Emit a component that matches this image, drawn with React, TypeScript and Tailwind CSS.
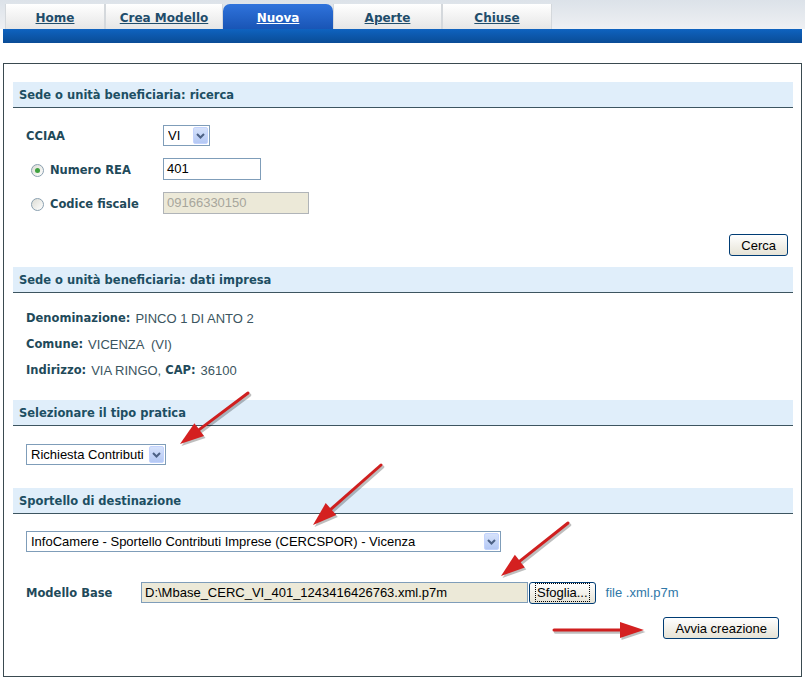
import type { ReactElement, ReactNode } from 'react';

const tabs = [
	{ label: 'Home', w: 'w-[100px]' },
	{ label: 'Crea Modello', w: 'w-[118px]' },
	{ label: 'Nuova', w: 'w-[110px]', active: true },
	{ label: 'Aperte', w: 'w-[109px]' },
	{ label: 'Chiuse', w: 'w-[110px]' },
];

const verdana = "font-['DejaVu_Sans',Verdana,sans-serif]";
const arial = "font-['Liberation_Sans',Arial,sans-serif]";

function SectionHeader({ children }: { children: ReactNode }): ReactElement {
	return (
		<div
			className={`h-[26px] flex items-center pl-[6px] pt-[2px] bg-[#e0eefa] border-b border-[#3d5560] text-[11.5px] font-bold text-[#1d4f63] ${verdana}`}
		>
			{children}
		</div>
	);
}

function Select({ value, w }: { value: string; w: string }): ReactElement {
	return (
		<div
			className={`${w} h-[21px] flex items-center border border-[#7f9db9] bg-white pl-[4px] pr-[1px] ${arial} font-normal text-[13px] text-black`}
		>
			<span className="flex-1 truncate">{value}</span>
			<span className="w-[15px] h-[17px] rounded-[2px] bg-gradient-to-b from-[#d6e2fb] to-[#b4c8f4] border border-[#c3d3fd] flex items-center justify-center">
				<svg width="9" height="6" viewBox="0 0 9 6">
					<path d="M1 1 L4.5 4.5 L8 1" fill="none" stroke="#4d6185" strokeWidth="2" />
				</svg>
			</span>
		</div>
	);
}

function Button({ children, focus }: { children: ReactNode; focus?: boolean }): ReactElement {
	return (
		<button
			className={`h-[22px] ${focus ? 'px-[6px]' : 'px-[11px]'} rounded-[3px] border border-[#003c74] bg-gradient-to-b from-white to-[#e6e3d6] ${arial} font-normal text-[13px] text-black leading-none`}
		>
			<span className={focus ? 'outline-1 outline-dotted outline-black px-[1px] py-[1px]' : ''}>
				{children}
			</span>
		</button>
	);
}

function Radio({ checked }: { checked?: boolean }): ReactElement {
	return (
		<span className="w-[13px] h-[13px] rounded-full border border-[#8aa0b0] bg-gradient-to-br from-[#dcdcd4] to-white flex items-center justify-center">
			{checked && <span className="w-[5px] h-[5px] rounded-full bg-[#3fa13f]" />}
		</span>
	);
}

function Arrow({ x1, y1, x2, y2 }: { x1: number; y1: number; x2: number; y2: number }): ReactElement {
	const dx = x2 - x1;
	const dy = y2 - y1;
	const len = Math.hypot(dx, dy);
	const ux = dx / len;
	const uy = dy / len;
	const hl = 24;
	const hw = 8;
	const bx = x2 - ux * hl;
	const by = y2 - uy * hl;
	const head = `${x2},${y2} ${bx - uy * hw},${by + ux * hw} ${bx + uy * hw},${by - ux * hw}`;
	return (
		<g>
			<g transform="translate(1.5,2)" opacity="0.25">
				<line x1={x1} y1={y1} x2={bx} y2={by} stroke="#000" strokeWidth="3.5" strokeLinecap="round" />
				<polygon points={head} fill="#000" />
			</g>
			<line x1={x1} y1={y1} x2={bx} y2={by} stroke="#cf1f1f" strokeWidth="3" strokeLinecap="round" />
			<polygon points={head} fill="#d42020" />
		</g>
	);
}

export default function App(): ReactElement {
	return (
		<div className="relative w-[805px] h-[681px] bg-white overflow-hidden">
			{/* tab bar */}
			<div className="bg-gradient-to-b from-[#dce2e9] to-[#eef0f3] pt-[4px] pl-[5px] flex">
				{tabs.map((t) => (
					<div
						key={t.label}
						className={`${t.w} h-[25px] flex items-center justify-center pt-[2px] text-[12px] font-bold underline ${verdana} ${
							t.active
								? 'rounded-t-[7px] bg-gradient-to-b from-[#2f73dc] to-[#1955b6] text-white'
								: 'bg-gradient-to-b from-white to-[#e6e6e6] border-x border-[#d4d8dc] text-[#1f4d6b]'
						}`}
					>
						{t.label}
					</div>
				))}
			</div>
			<div className="mx-[3px] h-[14px] bg-gradient-to-b from-[#0f63c0] to-[#0a4c96]" />

			{/* main panel */}
			<div className="mx-[3px] mt-[20px] h-[614px] border border-[#3a4a50] pt-[18px] pl-[9px] pr-[8px]">
				<SectionHeader>Sede o unità beneficiaria: ricerca</SectionHeader>
				<div className={`pl-[13px] text-[11.5px] font-bold text-[#1f4a5a] ${verdana}`}>
					<div className="mt-[17px] h-[21px] flex items-center">
						<span className="w-[137px] pt-[3px]">CCIAA</span>
						<Select value="VI" w="w-[47px]" />
					</div>
					<div className="mt-[12px] h-[22px] flex items-center">
						<span className="w-[137px] flex items-center gap-[6px] pl-[5px] pt-[3px]">
							<Radio checked />
							Numero REA
						</span>
						<div className={`w-[98px] h-[22px] border border-[#7f9db9] bg-white flex items-center px-[3px] ${arial} font-normal text-[13px] text-black`}>
							401
						</div>
					</div>
					<div className="mt-[12px] h-[22px] flex items-center">
						<span className="w-[137px] flex items-center gap-[6px] pl-[5px] pt-[3px]">
							<Radio />
							Codice fiscale
						</span>
						<div className={`w-[146px] h-[22px] border border-[#b0b4b8] bg-[#ece9d8] flex items-center px-[3px] ${arial} font-normal text-[13px] text-[#a7a69c]`}>
							09166330150
						</div>
					</div>
				</div>
				<div className="mt-[20px] flex justify-end pr-[5px]">
					<Button>Cerca</Button>
				</div>

				<div className="mt-[11px]">
					<SectionHeader>Sede o unità beneficiaria: dati impresa</SectionHeader>
				</div>
				<div className={`mt-[13px] pl-[13px] text-[11.5px] font-bold text-[#1f4a5a] ${verdana}`}>
					<div className="h-[26px] flex items-center">
						Denominazione:<span className={`ml-[5px] font-normal text-[13px] text-[#3b5560] ${arial}`}>PINCO 1 DI ANTO 2</span>
					</div>
					<div className="h-[26px] flex items-center">
						Comune:<span className={`ml-[5px] font-normal text-[13px] text-[#3b5560] whitespace-pre ${arial}`}>VICENZA  (VI)</span>
					</div>
					<div className="h-[25px] flex items-center">
						Indirizzo:<span className={`ml-[5px] font-normal text-[13px] text-[#3b5560] ${arial}`}>VIA RINGO, </span>
						<span className="ml-[4px]">CAP:</span>
						<span className={`ml-[5px] font-normal text-[13px] text-[#3b5560] ${arial}`}>36100</span>
					</div>
				</div>

				<div className="mt-[17px]">
					<SectionHeader>Selezionare il tipo pratica</SectionHeader>
				</div>
				<div className="mt-[18px] pl-[13px]">
					<Select value="Richiesta Contributi" w="w-[140px]" />
				</div>

				<div className="mt-[23px]">
					<SectionHeader>Sportello di destinazione</SectionHeader>
				</div>
				<div className="mt-[17px] pl-[13px]">
					<Select value="InfoCamere - Sportello Contributi Imprese (CERCSPOR) - Vicenza" w="w-[475px]" />
				</div>

				<div className={`mt-[30px] pl-[13px] h-[21px] flex items-center text-[11.5px] font-bold text-[#1f4a5a] ${verdana}`}>
					<span className="w-[115px] pt-[2px]">Modello Base</span>
					<div className={`w-[387px] h-[21px] border border-[#7f9db9] bg-[#ece9d8] flex items-center px-[3px] ${arial} font-normal text-[13px] text-black`}>
						D:\Mbase_CERC_VI_401_1243416426763.xml.p7m
					</div>
					<span className="ml-[1px]">
						<Button focus>Sfoglia...</Button>
					</span>
					<span className={`ml-[10px] font-normal text-[13px] text-[#2f78a8] ${arial}`}>file .xml.p7m</span>
				</div>
				<div className="mt-[14px] flex justify-end pr-[14px]">
					<Button>Avvia creazione</Button>
				</div>
			</div>

			{/* annotation arrows */}
			<svg className="absolute inset-0 pointer-events-none" width="805" height="681">
				<Arrow x1={248} y1={393} x2={180} y2={444} />
				<Arrow x1={381} y1={465} x2={313} y2={525} />
				<Arrow x1={568} y1={523} x2={501} y2={576} />
				<Arrow x1={554} y1={630} x2={644} y2={630} />
			</svg>
		</div>
	);
}
